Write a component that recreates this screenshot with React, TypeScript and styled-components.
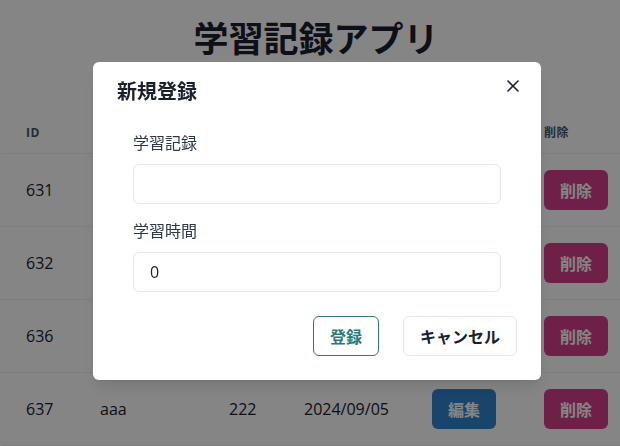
import React from "react";
import styled, { createGlobalStyle } from "styled-components";

const GlobalStyle = createGlobalStyle`
  html, body { margin: 0; padding: 0; background: #ffffff; overflow: hidden; }
  body {
    font-family: "Open Sans", "Noto Sans CJK JP", sans-serif;
    color: #1A202C;
  }
  * { box-sizing: border-box; }
`;

const Page = styled.div`
  width: 620px;
  height: 446px;
  overflow: hidden;
`;

const Title = styled.h1`
  margin: 0;
  padding: 19px 0 0 12px;
  text-align: center;
  font-family: "Noto Sans CJK JP", sans-serif;
  font-size: 35px;
  line-height: 36px;
  font-weight: 700;
  color: #1A202C;
  height: 113px;
`;

const Table = styled.table`
  margin-left: 2px;
  width: 632px;
  table-layout: fixed;
  border-collapse: collapse;
`;

const Th = styled.th`
  text-align: left;
  padding: 12px 24px;
  font-family: "Open Sans", "Noto Sans CJK JP", sans-serif;
  font-size: 12px;
  line-height: 16px;
  font-weight: 700;
  letter-spacing: 0.05em;
  text-transform: uppercase;
  color: #4A5568;
  border-bottom: 1px solid #EDF2F7;
  white-space: nowrap;
`;

const Td = styled.td`
  padding: 16px 24px;
  font-size: 16px;
  line-height: 40px;
  color: #1A202C;
  border-bottom: 1px solid #EDF2F7;
  white-space: nowrap;
`;

const ActionButton = styled.button<{ $tone: "blue" | "pink" }>`
  display: flex;
  align-items: center;
  justify-content: center;
  height: 40px;
  padding: 0 16px;
  border: none;
  border-radius: 6px;
  background: ${(p) => (p.$tone === "blue" ? "#3182CE" : "#D53F8C")};
  color: #ffffff;
  font-family: "Noto Sans CJK JP", sans-serif;
  font-size: 16px;
  line-height: 24px;
  font-weight: 700;
`;

const Overlay = styled.div`
  position: fixed;
  inset: 0;
  background: rgba(0, 0, 0, 0.48);
  display: flex;
  align-items: flex-start;
  justify-content: center;
  padding: 62px 0 0 14px;
`;

const Modal = styled.section`
  position: relative;
  width: 448px;
  background: #ffffff;
  border-radius: 6px;
  box-shadow: 0 10px 15px -3px rgba(0, 0, 0, 0.1), 0 4px 6px -2px rgba(0, 0, 0, 0.05);
  display: flex;
  flex-direction: column;
`;

const ModalHeader = styled.header`
  padding: 14px 24px 18px;
  font-family: "Noto Sans CJK JP", sans-serif;
  font-size: 20px;
  line-height: 30px;
  font-weight: 700;
  color: #1A202C;
`;

const CloseButton = styled.button`
  position: absolute;
  top: 8px;
  right: 12px;
  width: 32px;
  height: 32px;
  display: flex;
  align-items: center;
  justify-content: center;
  border: none;
  background: transparent;
  padding: 0;
  color: #1A202C;
`;

const ModalBody = styled.div`
  padding: 8px 24px;
`;

const Fields = styled.div`
  padding: 0 16px;
  display: flex;
  flex-direction: column;
  gap: 16px;
`;

const Field = styled.div`
  display: flex;
  flex-direction: column;
`;

const Label = styled.label`
  font-family: "Noto Sans CJK JP", sans-serif;
  font-size: 16px;
  line-height: 20px;
  font-weight: 400;
  color: #2D3748;
  margin-bottom: 12px;
`;

const Input = styled.input`
  height: 40px;
  width: 100%;
  padding: 0 16px;
  border: 1px solid #E2E8F0;
  border-radius: 6px;
  font-family: "Open Sans", sans-serif;
  font-size: 16px;
  color: #1A202C;
  outline: none;
  background: #ffffff;
`;

const ModalFooter = styled.footer`
  display: flex;
  justify-content: flex-end;
  gap: 24px;
  padding: 16px 24px 24px;
`;

const OutlineButton = styled.button<{ $tone: "teal" | "gray" }>`
  height: 40px;
  padding: 0 16px;
  border-radius: 6px;
  background: #ffffff;
  border: 1px solid ${(p) => (p.$tone === "teal" ? "#2C7A7B" : "#E2E8F0")};
  color: ${(p) => (p.$tone === "teal" ? "#2C7A7B" : "#1A202C")};
  font-family: "Noto Sans CJK JP", sans-serif;
  font-size: 16px;
  font-weight: 700;
`;

const rows = [
  { id: 631, title: "React", time: 10, date: "2024/09/01" },
  { id: 632, title: "TypeScript", time: 20, date: "2024/09/02" },
  { id: 636, title: "Chakra", time: 5, date: "2024/09/04" },
  { id: 637, title: "aaa", time: 222, date: "2024/09/05" },
];

export default function App() {
  return (
    <Page>
      <GlobalStyle />
      <Title>学習記録アプリ</Title>
      <Table>
        <colgroup>
          <col style={{ width: 74 }} />
          <col style={{ width: 129 }} />
          <col style={{ width: 75 }} />
          <col style={{ width: 128 }} />
          <col style={{ width: 112 }} />
          <col style={{ width: 114 }} />
        </colgroup>
        <thead>
          <tr>
            <Th>ID</Th>
            <Th>タイトル</Th>
            <Th>時間</Th>
            <Th>日付</Th>
            <Th>編集</Th>
            <Th>削除</Th>
          </tr>
        </thead>
        <tbody>
          {rows.map((r) => (
            <tr key={r.id}>
              <Td>{r.id}</Td>
              <Td>{r.title}</Td>
              <Td>{r.time}</Td>
              <Td>{r.date}</Td>
              <Td>
                <ActionButton $tone="blue">編集</ActionButton>
              </Td>
              <Td>
                <ActionButton $tone="pink">削除</ActionButton>
              </Td>
            </tr>
          ))}
        </tbody>
      </Table>
      <Overlay>
        <Modal>
          <ModalHeader>新規登録</ModalHeader>
          <CloseButton aria-label="Close">
            <svg width="12" height="12" viewBox="0 0 12 12">
              <path d="M1 1 L11 11 M11 1 L1 11" stroke="currentColor" strokeWidth="1.6" strokeLinecap="round" />
            </svg>
          </CloseButton>
          <ModalBody>
            <Fields>
              <Field>
                <Label>学習記録</Label>
                <Input defaultValue="" />
              </Field>
              <Field>
                <Label>学習時間</Label>
                <Input defaultValue="0" />
              </Field>
            </Fields>
          </ModalBody>
          <ModalFooter>
            <OutlineButton $tone="teal">登録</OutlineButton>
            <OutlineButton $tone="gray">キャンセル</OutlineButton>
          </ModalFooter>
        </Modal>
      </Overlay>
    </Page>
  );
}
